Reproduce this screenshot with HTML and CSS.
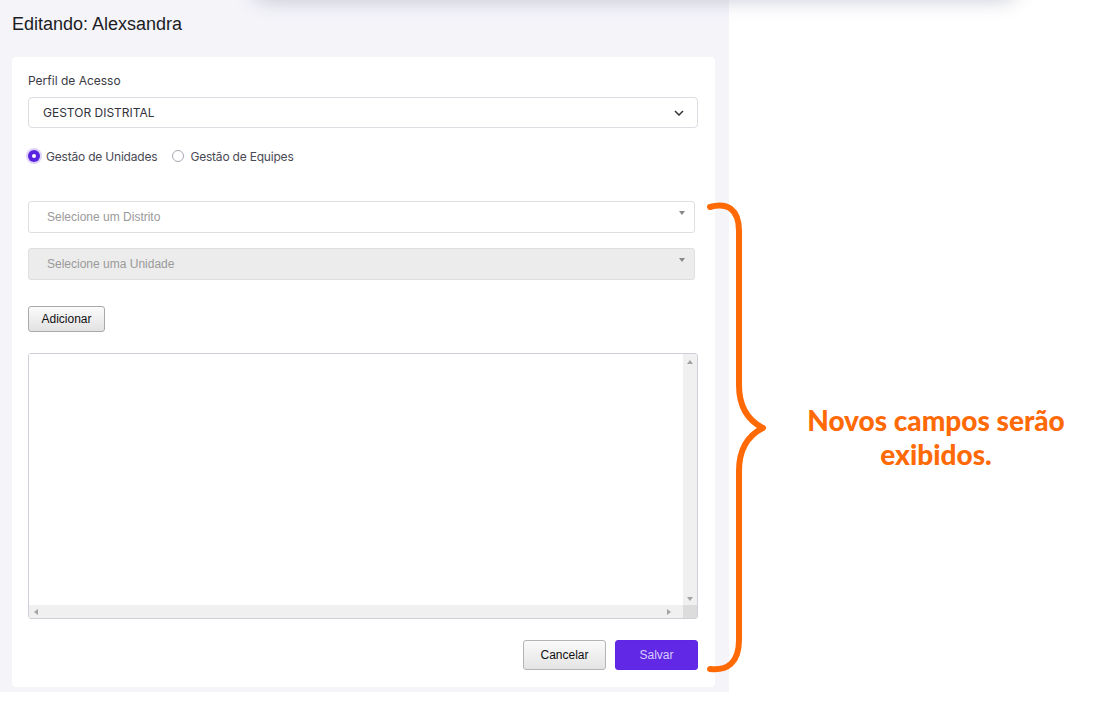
FILE: index.html
```html
<html>
<head>
    <title>Editando: Alexsandra</title>
    <link rel="stylesheet" href="styles.css">
</head>
<body>
    <div class="top-shadow"></div>
    <div class="panel">
        <h1 class="title">Editando: Alexsandra</h1>
        <div class="card">
            <label class="field-label">Perfil de Acesso</label>
            <div class="select">
                <span>GESTOR DISTRITAL</span>
                <svg class="chevron" width="10" height="6" viewBox="0 0 10 6"><path d="M1 1 L5 5 L9 1" fill="none" stroke="#333" stroke-width="1.5"/></svg>
            </div>
            <div class="radios">
                <span class="radio checked"></span><span class="radio-text">Gestão de Unidades</span>
                <span class="radio"></span><span class="radio-text">Gestão de Equipes</span>
            </div>
            <div class="combo">
                <span>Selecione um Distrito</span>
                <span class="caret"></span>
            </div>
            <div class="combo disabled">
                <span>Selecione uma Unidade</span>
                <span class="caret"></span>
            </div>
            <button class="btn-add">Adicionar</button>
            <div class="listbox">
                <div class="list-main">
                    <div class="list-area"></div>
                    <div class="vbar"><span class="tri up"></span><span class="tri down"></span></div>
                </div>
                <div class="hbar">
                    <div class="hbar-track"><span class="tri left"></span><span class="tri right"></span></div>
                    <div class="corner"></div>
                </div>
            </div>
            <div class="actions">
                <button class="btn-cancel">Cancelar</button>
                <button class="btn-save">Salvar</button>
            </div>
        </div>
    </div>
    <!-- annotation over the canvas -->
    <svg class="brace" width="80" height="480" viewBox="0 0 80 480">
        <path d="M7 12 C 24 7, 36 14, 36 36 L 36 190 C 36 214, 46 226, 60 233 C 46 240, 36 252, 36 276 L 36 445 C 36 468, 24 476, 7 474" fill="none" stroke="#ff6a06" stroke-width="6" stroke-linecap="round" stroke-linejoin="round"/>
    </svg>
    <p class="note">Novos campos serão<br>exibidos.</p>
</body>
</html>
```

FILE: styles.css
```css
body {
    margin: 0;
    background: #ffffff;
    font-family: "Liberation Sans", Arial, sans-serif;
    width: 1098px;
    height: 705px;
    overflow: hidden;
    position: relative;
}
.top-shadow {
    position: absolute;
    left: 250px;
    top: -40px;
    width: 770px;
    height: 40px;
    box-shadow: 0 0 20px rgba(60, 70, 110, 0.28);
    border-radius: 20px;
    z-index: 2;
}
.panel {
    width: 729px;
    height: 692px;
    background: #f4f4f9;
    padding: 0 14px 0 12px;
    box-sizing: border-box;
    display: flex;
    flex-direction: column;
}
.title {
    margin: 0;
    padding-top: 14px;
    height: 44px;
    box-sizing: border-box;
    font-size: 18px;
    font-weight: normal;
    color: #1c1c24;
}
.card {
    background: #fff;
    border-radius: 4px;
    height: 630px;
    margin-top: 13px;
    padding: 16px 17px 0 16px;
    box-sizing: border-box;
    display: flex;
    flex-direction: column;
}
.field-label {
    font-family: Inter, sans-serif;
    font-size: 12px;
    color: #3a3a44;
    line-height: 15px;
}
.select {
    margin-top: 9px;
    height: 31px;
    border: 1px solid #dcdce2;
    border-radius: 4px;
    box-sizing: border-box;
    display: flex;
    align-items: center;
    justify-content: space-between;
    padding: 0 13px 0 14px;
    font-family: Inter, sans-serif;
    font-size: 12px;
    color: #33333d;
}
.radios {
    margin-top: 21px;
    display: flex;
    align-items: center;
    height: 14px;
    font-family: Inter, sans-serif;
    font-size: 12px;
    letter-spacing: -0.2px;
    color: #4a4a55;
}
.radio {
    width: 10px;
    height: 10px;
    border: 1px solid #a8a8b2;
    border-radius: 50%;
    margin-right: 6px;
    background: #fff;
}
.radio.checked {
    border: 2px solid #5b24e0;
    background: #fff;
    box-shadow: 0 0 0 2px #5b24e0, 0 0 0 4px rgba(120, 80, 240, 0.25);
    margin-left: 2px;
    margin-right: 8px;
    width: 4px;
    height: 4px;
}
.radio-text {
    margin-right: 15px;
}
.combo {
    width: 667px;
    height: 32px;
    border: 1px solid #dedee3;
    border-radius: 3px;
    box-sizing: border-box;
    display: flex;
    align-items: center;
    justify-content: space-between;
    padding: 0 9px 0 18px;
    font-size: 12px;
    color: #9a9a9a;
    background: #fff;
}
.radios + .combo {
    margin-top: 38px;
}
.combo.disabled {
    margin-top: 15px;
    background: #ececec;
}
.caret {
    width: 0;
    height: 0;
    border-left: 3px solid transparent;
    border-right: 3px solid transparent;
    border-top: 4px solid #888;
    margin-bottom: 8px;
}
.btn-add {
    margin-top: 26px;
    width: 77px;
    height: 26px;
    font-family: "Liberation Sans", Arial, sans-serif;
    font-size: 12px;
    color: #111;
    border: 1px solid #a9a9a9;
    border-radius: 3px;
    background: linear-gradient(#fbfbfb, #e2e2e2);
    padding: 0;
}
.listbox {
    margin-top: 21px;
    height: 266px;
    border: 1px solid #cfcfd8;
    border-radius: 3px;
    box-sizing: border-box;
    display: flex;
    flex-direction: column;
    overflow: hidden;
}
.list-main {
    flex: 1;
    display: flex;
}
.list-area {
    flex: 1;
    background: #fff;
}
.vbar {
    width: 14px;
    background: #f0f0f0;
    display: flex;
    flex-direction: column;
    justify-content: space-between;
    align-items: center;
    padding: 6px 0 4px;
}
.hbar {
    height: 13px;
    display: flex;
}
.hbar-track {
    flex: 1;
    background: #f0f0f0;
    display: flex;
    justify-content: space-between;
    align-items: center;
    padding: 0 12px 0 5px;
}
.corner {
    width: 14px;
    background: #dcdcdc;
}
.tri {
    width: 0;
    height: 0;
}
.tri.up {
    border-left: 3px solid transparent;
    border-right: 3px solid transparent;
    border-bottom: 4px solid #a3a3a3;
}
.tri.down {
    border-left: 3px solid transparent;
    border-right: 3px solid transparent;
    border-top: 4px solid #a3a3a3;
}
.tri.left {
    border-top: 3px solid transparent;
    border-bottom: 3px solid transparent;
    border-right: 4px solid #a3a3a3;
}
.tri.right {
    border-top: 3px solid transparent;
    border-bottom: 3px solid transparent;
    border-left: 4px solid #a3a3a3;
}
.actions {
    margin-top: 21px;
    display: flex;
    justify-content: flex-end;
    gap: 9px;
}
.actions button {
    width: 83px;
    height: 30px;
    font-family: "Liberation Sans", Arial, sans-serif;
    font-size: 12px;
    border-radius: 3px;
    padding: 0;
}
.btn-cancel {
    color: #111;
    border: 1px solid #b4b4b4;
    background: linear-gradient(#fafafa, #e4e4e4);
}
.btn-save {
    color: #d8ccff;
    border: 1px solid #5f26e4;
    background: #6129e6;
}
.brace {
    position: absolute;
    left: 703px;
    top: 195px;
}
.note {
    position: absolute;
    left: 780px;
    top: 403px;
    width: 312px;
    margin: 0;
    text-align: center;
    font-family: Lato, sans-serif;
    font-weight: 900;
    font-size: 28px;
    line-height: 34px;
    color: #ff6a06;
}
```
